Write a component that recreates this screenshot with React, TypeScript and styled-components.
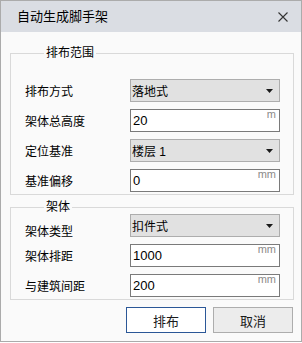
import styled, { createGlobalStyle } from 'styled-components';

const GlobalStyle = createGlobalStyle`
  html, body {
    margin: 0;
    padding: 0;
    background: #ffffff;
  }
  * {
    box-sizing: border-box;
  }
`;

const FONT = `"Liberation Sans", "Noto Sans CJK SC", sans-serif`;

const Window = styled.div`
  width: 302px;
  height: 342px;
  border: 1px solid #ababab;
  background: #fafafa;
  display: flex;
  flex-direction: column;
  font-family: ${FONT};
  color: #000;
`;

const TitleBar = styled.div`
  height: 31px;
  flex: none;
  display: flex;
  align-items: center;
  justify-content: space-between;
  padding: 0 13px 0 16px;
  background: #dadde3;
`;

const Title = styled.span`
  font-size: 13px;
  line-height: 16px;
  color: #000;
`;

const Body = styled.div`
  display: flex;
  flex-direction: column;
  padding: 0 7px 0 9px;
`;

const Group = styled.fieldset<{ $top: number; $padTop: number }>`
  margin: ${({ $top }) => $top}px 0 0 0;
  padding: ${({ $padTop }) => $padTop}px 0 2px 14px;
  border: 1px solid #d9d9d9;
  min-inline-size: 0;
  display: flex;
  flex-direction: column;
  gap: 7px;
`;

const Legend = styled.legend`
  margin-left: 19px;
  padding: 0 2px;
  font-size: 12px;
  line-height: 14px;
`;

const Row = styled.div`
  display: flex;
  align-items: center;
  height: 23px;
`;

const Label = styled.span<{ $shift?: number }>`
  width: 105px;
  font-size: 12px;
  line-height: 14px;
  position: relative;
  top: ${({ $shift }) => $shift ?? 1}px;
`;

const Select = styled.div`
  width: 150px;
  height: 23px;
  display: flex;
  align-items: center;
  justify-content: space-between;
  padding: 0 6px 0 1px;
  background: #e1e1e1;
  border: 1px solid #adadad;
  font-size: 12px;
`;

const Field = styled.div`
  position: relative;
  width: 150px;
  height: 23px;
  background: #ffffff;
  border: 1px solid #7a7a7a;
  display: flex;
  align-items: center;
  padding-left: 2px;
  font-size: 13px;
`;

const Unit = styled.span`
  position: absolute;
  right: 3px;
  top: -2px;
  font-size: 11px;
  line-height: 12px;
  color: #8a8a8a;
`;

const Buttons = styled.div`
  display: flex;
  justify-content: flex-end;
  gap: 7px;
  margin-top: 7px;
  padding-right: 1px;
`;

const Button = styled.div<{ $primary?: boolean }>`
  width: 80px;
  height: 26px;
  display: flex;
  align-items: center;
  justify-content: center;
  font-size: 13px;
  color: #1a1a1a;
  background: ${({ $primary }) => ($primary ? '#ffffff' : '#ececec')};
  border: 1px solid ${({ $primary }) => ($primary ? '#2b5797' : '#adadad')};
`;

const Arrow = () => (
  <svg width="7" height="4" viewBox="0 0 7 4">
    <path d="M0 0h7L3.5 4z" fill="#1a1a1a" />
  </svg>
);

const CloseIcon = () => (
  <svg width="10" height="10" viewBox="0 0 10 10">
    <path d="M0.5 0.5l9 9M9.5 0.5l-9 9" stroke="#333" strokeWidth="1.1" />
  </svg>
);

const SelectRow = ({ label, value, shift }: { label: string; value: string; shift?: number }) => (
  <Row>
    <Label $shift={shift}>{label}</Label>
    <Select>
      <span>{value}</span>
      <Arrow />
    </Select>
  </Row>
);

const InputRow = ({ label, value, unit }: { label: string; value: string; unit: string }) => (
  <Row>
    <Label>{label}</Label>
    <Field>
      {value}
      <Unit>{unit}</Unit>
    </Field>
  </Row>
);

const App = (): JSX.Element => (
  <>
    <GlobalStyle />
    <Window>
      <TitleBar>
        <Title>自动生成脚手架</Title>
        <CloseIcon />
      </TitleBar>
      <Body>
        <Group $top={14} $padTop={19}>
          <Legend>排布范围</Legend>
          <SelectRow label="排布方式" value="落地式" />
          <InputRow label="架体总高度" value="20" unit="m" />
          <SelectRow label="定位基准" value="楼层 1" />
          <InputRow label="基准偏移" value="0" unit="mm" />
        </Group>
        <Group $top={5} $padTop={0}>
          <Legend>架体</Legend>
          <SelectRow label="架体类型" value="扣件式" shift={6} />
          <InputRow label="架体排距" value="1000" unit="mm" />
          <InputRow label="与建筑间距" value="200" unit="mm" />
        </Group>
        <Buttons>
          <Button $primary>排布</Button>
          <Button>取消</Button>
        </Buttons>
      </Body>
    </Window>
  </>
);

export default App;
